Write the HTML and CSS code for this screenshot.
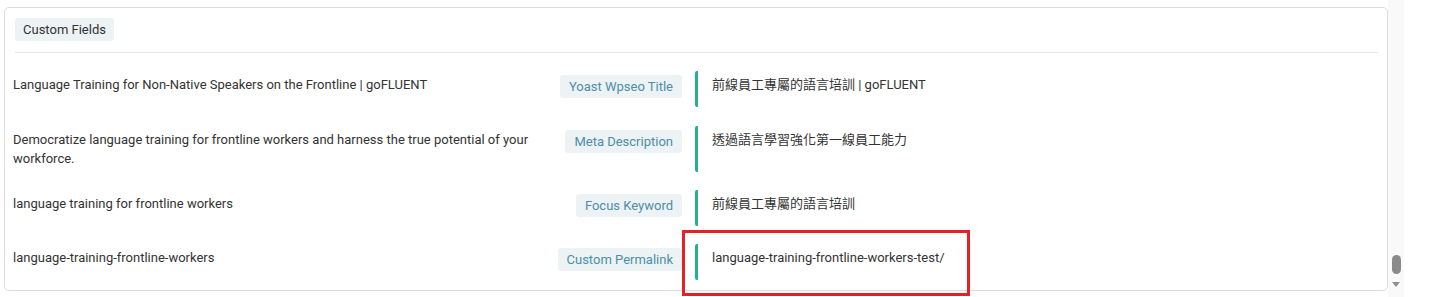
FILE: index.html
```html
<!DOCTYPE html>
<html lang="en">
<head>
  <meta charset="UTF-8">
  <title>Custom Fields</title>
  <link rel="stylesheet" href="styles.css">
</head>
<body>
<div class="page">
  <div class="card">
    <div class="cardHead">
      <span class="tag">Custom Fields</span>
    </div>
    <div class="fieldList">
      <div class="fieldRow">
        <div class="source">Language Training for Non-Native Speakers on the Frontline | goFLUENT</div>
        <div class="label"><span class="tag field">Yoast Wpseo Title</span></div>
        <div class="value">前線員工專屬的語言培訓 | goFLUENT</div>
      </div>
      <div class="fieldRow">
        <div class="source">Democratize language training for frontline workers and harness the true potential of your workforce.</div>
        <div class="label"><span class="tag field">Meta Description</span></div>
        <div class="value">透過語言學習強化第一線員工能力</div>
      </div>
      <div class="fieldRow">
        <div class="source">language training for frontline workers</div>
        <div class="label"><span class="tag field">Focus Keyword</span></div>
        <div class="value">前線員工專屬的語言培訓</div>
      </div>
      <div class="fieldRow marked">
        <div class="source">language-training-frontline-workers</div>
        <div class="label"><span class="tag field">Custom Permalink</span></div>
        <div class="value">language-training-frontline-workers-test/</div>
        <div class="highlight"></div>
      </div>
    </div>
  </div>
  <div class="scrollTrack">
    <div class="thumb"></div>
    <div class="arrow"></div>
  </div>
</div>
</body>
</html>
```

FILE: styles.css
```css
/*base*/
html, body {
  margin: 0;
  padding: 0;
  background: #fff;
}
body {
  font-family: Roboto, "Noto Sans CJK TC", sans-serif;
  font-size: 13px;
  color: #333;
}

.page {
  display: flex;
  height: 297px;
  padding-left: 4px;
  box-sizing: border-box;
}

.card {
  width: 1384px;
  margin-top: 7px;
  height: 284px;
  box-sizing: border-box;
  border: 1px solid #dcdcdc;
  border-radius: 5px;
}

.cardHead {
  margin: 0 9px 0 10px;
  padding: 10px 0 11px;
  border-bottom: 1px solid #e6e6e6;
}

.tag {
  display: inline-block;
  height: 23px;
  line-height: 23px;
  padding: 0 8px;
  border-radius: 3px;
  background-color: #edf2f4;
}

.tag.field {
  padding: 0 9px;
  color: #4b8fa9;
}

.fieldList {
  margin-top: 18px;
}

.fieldRow {
  display: grid;
  grid-template-columns: 522px 134px 1fr;
  column-gap: 13px;
  padding: 0 0 0 8px;
  margin-bottom: 18px;
  position: relative;
  align-items: stretch;
}

.fieldRow:first-child {
  margin-bottom: 19px;
}

.fieldRow > div {
  line-height: 19px;
}

.source {
  padding: 4px 0;
}

.label {
  padding-top: 4px;
  text-align: right;
}

.value {
  min-height: 36px;
  box-sizing: border-box;
  padding: 4px 0 4px 14px;
  border-left: 3px solid #27b08e;
  border-radius: 2px;
}

.highlight {
  position: absolute;
  left: 677px;
  top: -14px;
  width: 288px;
  height: 66px;
  box-sizing: border-box;
  border: 3px solid #e52127;
}

.scrollTrack {
  width: 16px;
  background: #f9f9f9;
  display: flex;
  flex-direction: column;
  align-items: center;
  padding-top: 255px;
  box-sizing: border-box;
}

.thumb {
  width: 9px;
  height: 19px;
  border-radius: 5px;
  background: #8a8a8a;
}

.arrow {
  margin-top: 8px;
  width: 0;
  height: 0;
  border-left: 4px solid transparent;
  border-right: 4px solid transparent;
  border-top: 5px solid #8f8f8f;
}
```
